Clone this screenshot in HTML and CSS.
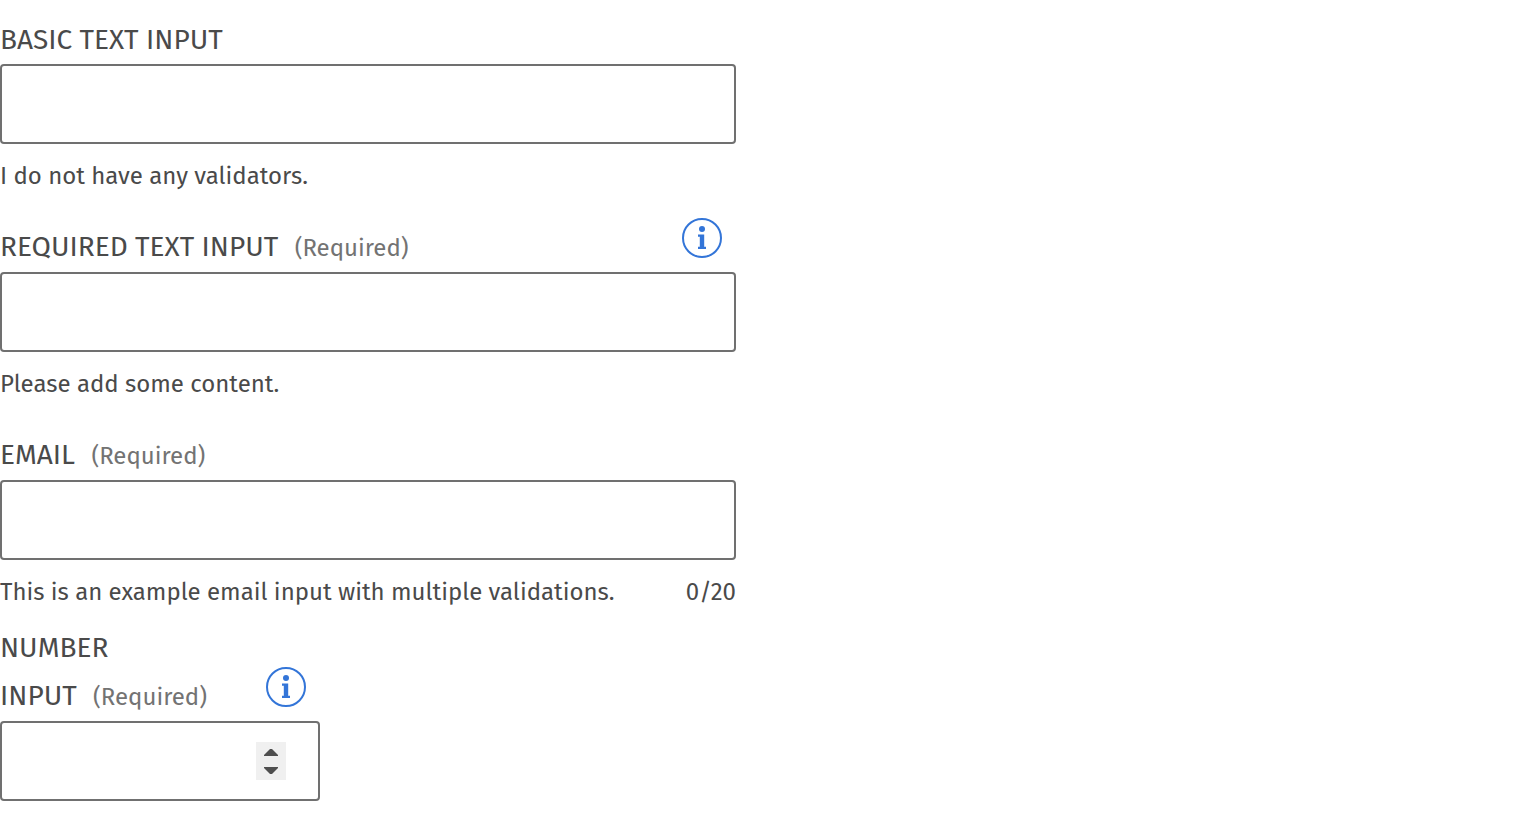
FILE: index.html
```html
<!DOCTYPE html>
<html lang="en">
<head>
<meta charset="utf-8">
<title>Text inputs</title>
<link rel="stylesheet" href="styles.css">
</head>
<body>
<form class="form">
  <div class="field">
    <div class="field-head"><label class="label" for="basic">Basic text input</label></div>
    <input class="input" id="basic" type="text" aria-describedby="basic-hint">
    <div class="field-foot"><span id="basic-hint">I do not have any validators.</span></div>
  </div>
  <div class="field">
    <div class="field-head">
      <label class="label" for="required">Required text input <span class="required">(Required)</span></label>
      <button class="info" type="button" aria-label="More about required text input">
        <svg viewBox="0 0 40 40" width="40" height="40"><circle class="ring" cx="20" cy="20" r="19"/><circle cx="20" cy="11" r="3"/><path d="M16 16.500h6.200v12.200H24V31h-8v-2.300h1.800v-9.900H16z"/></svg>
      </button>
    </div>
    <input class="input" id="required" type="text" required aria-describedby="required-hint">
    <div class="field-foot"><span id="required-hint">Please add some content.</span></div>
  </div>
  <div class="field">
    <div class="field-head"><label class="label" for="email">Email <span class="required">(Required)</span></label></div>
    <input class="input" id="email" type="email" maxlength="20" required aria-describedby="email-hint">
    <div class="field-foot"><span id="email-hint">This is an example email input with multiple validations.</span><span>0/20</span></div>
  </div>
  <div class="field-number">
    <div class="field-head">
      <label class="label" for="number">Number <span class="keep">input <span class="required">(Required)</span></span></label>
      <button class="info" type="button" aria-label="More about number input">
        <svg viewBox="0 0 40 40" width="40" height="40"><circle class="ring" cx="20" cy="20" r="19"/><circle cx="20" cy="11" r="3"/><path d="M16 16.500h6.200v12.200H24V31h-8v-2.300h1.800v-9.900H16z"/></svg>
      </button>
    </div>
    <div class="number-box">
      <input class="number-input" id="number" type="number" required>
      <div class="stepper">
        <button class="step" type="button" aria-label="Increase"><svg viewBox="0 0 14 8" width="14" height="8"><path d="M0 8V7l6-6h2l6 6v1z"/></svg></button>
        <button class="step" type="button" aria-label="Decrease"><svg viewBox="0 0 14 8" width="14" height="8"><path d="M0 0v1l6 6h2l6-6V0z"/></svg></button>
      </div>
    </div>
  </div>
</form>
</body>
</html>
```
FILE: styles.css
```css
* { box-sizing: border-box; }
body { margin: 0; background: #fff; color: #4a4a4a; font-family: "Fira Sans", "Noto Sans", sans-serif; }
.form { width: 48%; max-width: 736px; padding-top: 16px; }
.field + .field { margin-top: 15px; }
.field-head { display: flex; justify-content: space-between; align-items: flex-end; min-height: 48px; }
.label { font-size: 28px; line-height: 48px; text-transform: uppercase; }
.keep { white-space: nowrap; }
.required { margin-left: 9px; font-size: 24px; color: #737373; text-transform: none; }
.input, .number-box { display: block; width: 100%; height: 80px; border: 2px solid #707070; border-radius: 4px; background: #fff; }
.input { padding: 0 24px; font: inherit; font-size: 28px; }
.field-foot { display: flex; justify-content: space-between; min-height: 64px; font-size: 24px; line-height: 64px; }
.info { flex: none; width: 40px; height: 40px; margin: -8px 14px 14px 0; padding: 0; border: 0; background: none; }
.info svg { display: block; fill: #3375d8; }
.info .ring { fill: none; stroke: #3375d8; stroke-width: 2; }
.field-number { width: 320px; max-width: 100%; }
.number-box { display: flex; align-items: center; padding: 0 32px; }
.number-input { flex: 1; min-width: 0; height: 100%; padding: 0; border: 0; outline: 0; background: none; font: inherit; font-size: 28px; appearance: textfield; }
.number-input::-webkit-inner-spin-button { appearance: none; }
.stepper { display: flex; flex-direction: column; width: 30px; height: 38px; background: #f0f0f0; }
.step { display: flex; flex: 1; align-items: center; justify-content: center; padding: 0; border: 0; background: none; }
.step svg { fill: #4f4f4f; }
```
